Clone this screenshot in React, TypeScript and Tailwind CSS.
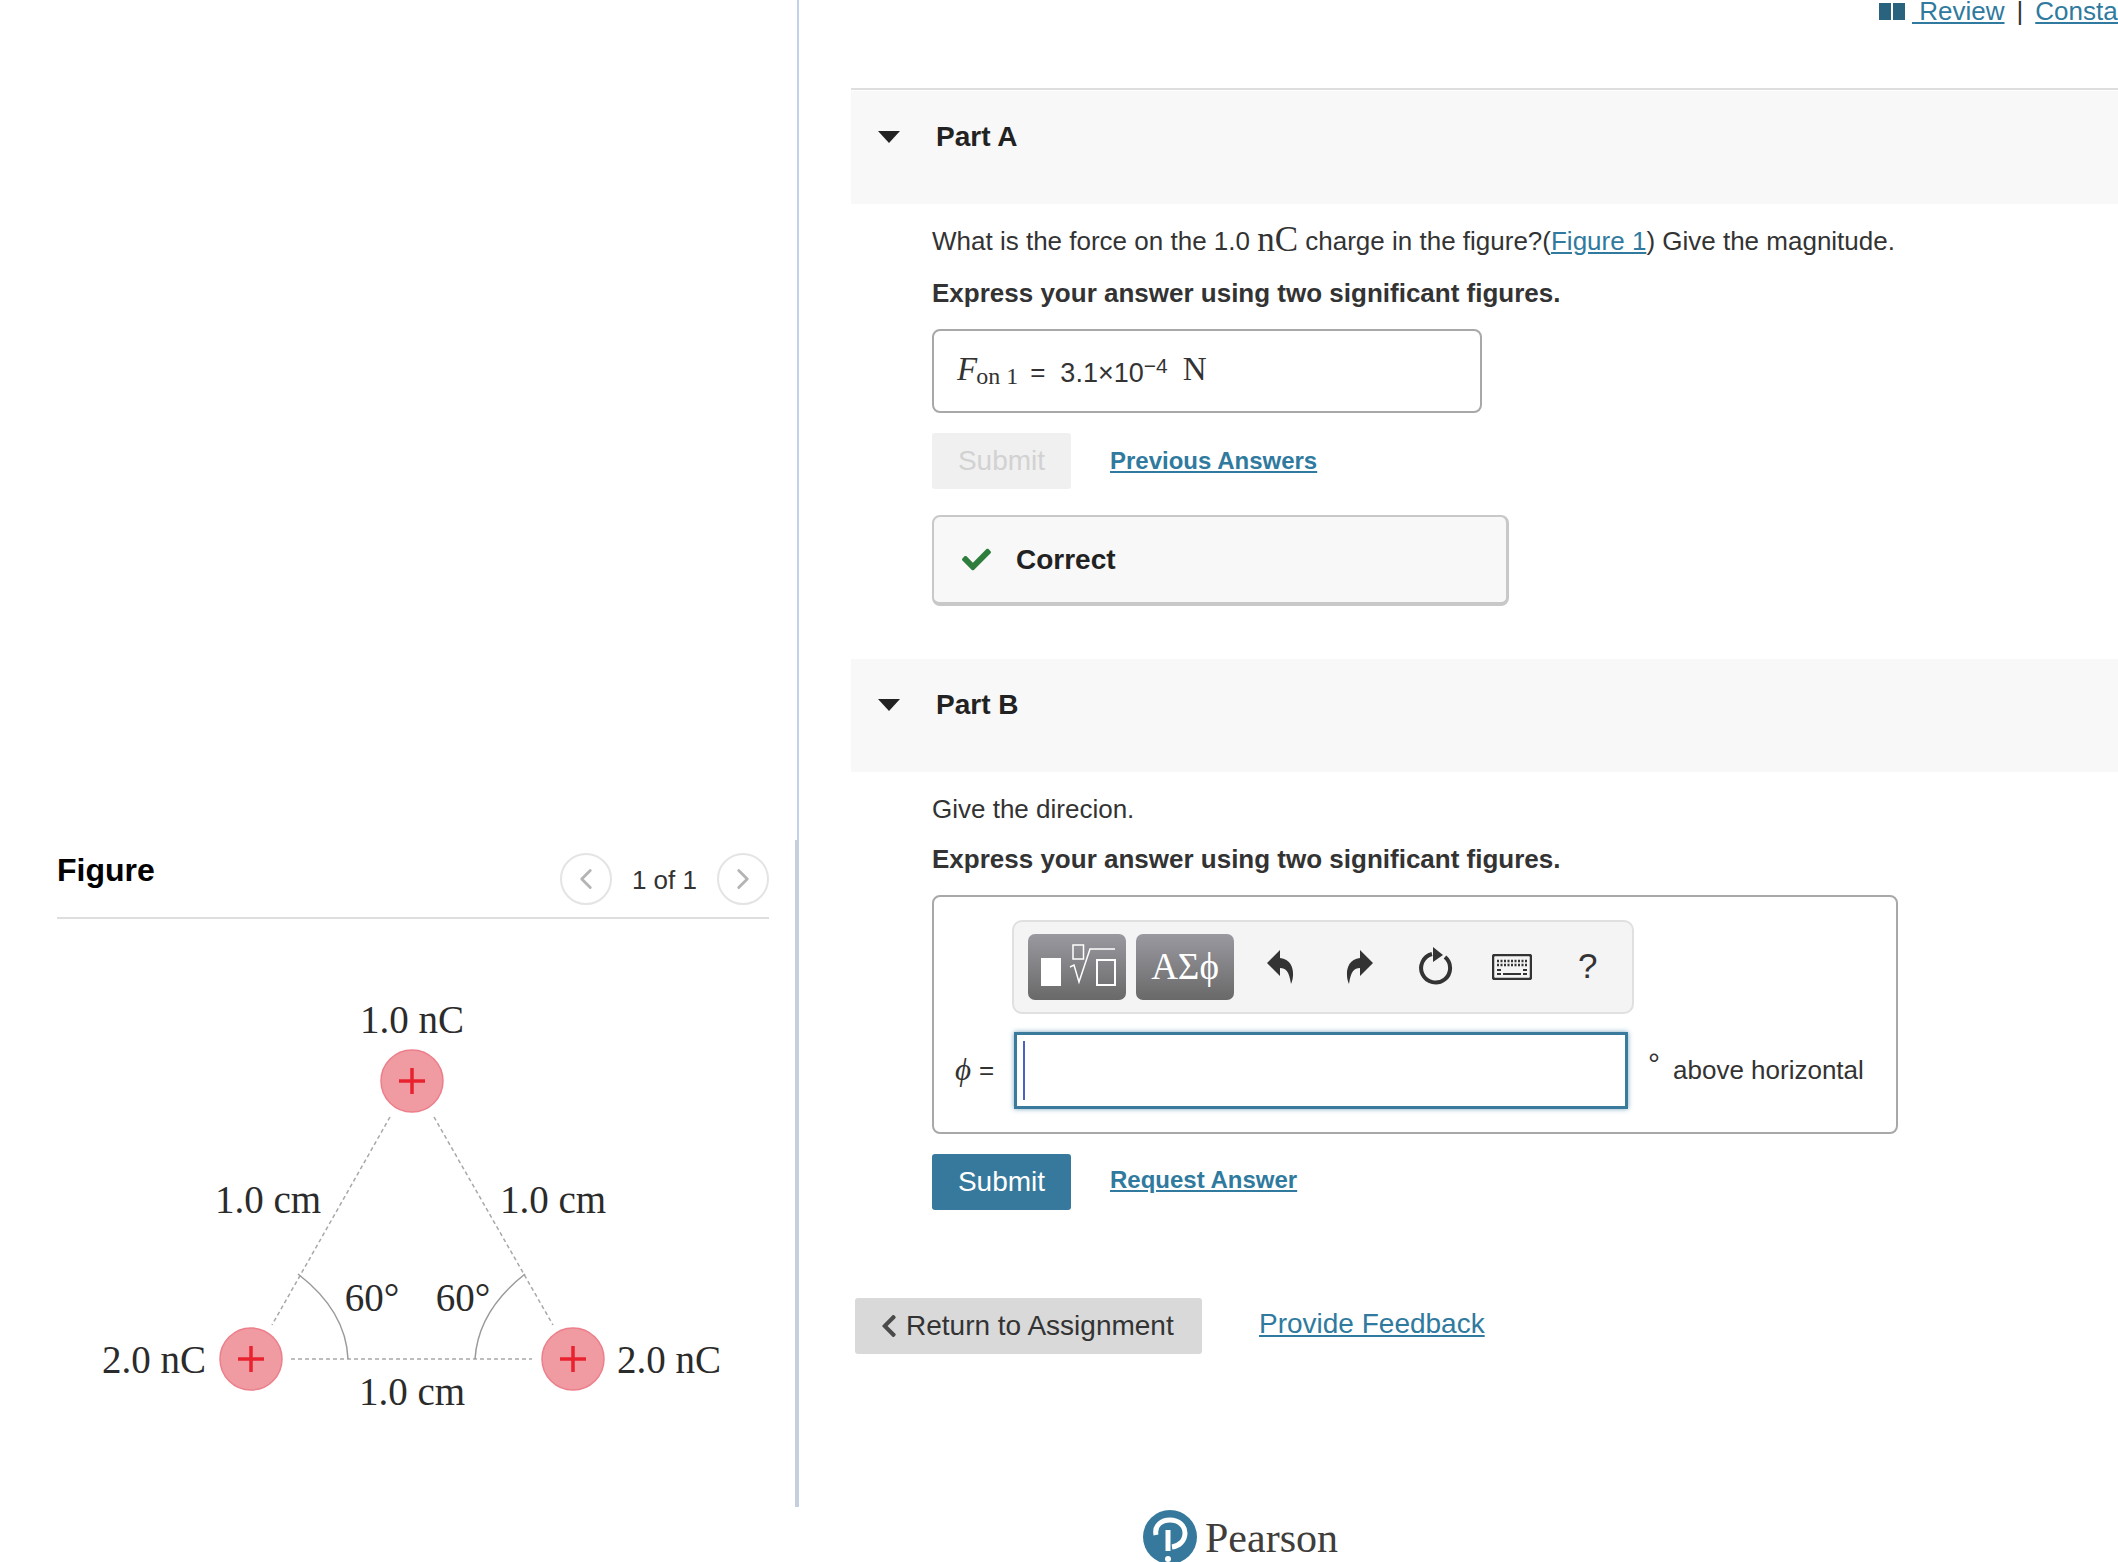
import { ChevronLeft, ChevronRight } from "lucide-react";
import { FaCheck, FaChevronLeft } from "react-icons/fa";

const LINK = "text-[#2f7a9e] underline";

function ChargeFigure() {
  const charges = [
    { cx: 412, cy: 162 },
    { cx: 251, cy: 440 },
    { cx: 573, cy: 440 },
  ];
  const labels = [
    { x: 412, y: 114, text: "1.0 nC" },
    { x: 268, y: 294, text: "1.0 cm" },
    { x: 553, y: 294, text: "1.0 cm" },
    { x: 154, y: 454, text: "2.0 nC" },
    { x: 669, y: 454, text: "2.0 nC" },
    { x: 412, y: 486, text: "1.0 cm" },
    { x: 372, y: 392, text: "60°" },
    { x: 463, y: 392, text: "60°" },
  ];
  return (
    <svg width="794" height="586" viewBox="0 0 794 586" className="block">
      <g stroke="#a8a8a8" strokeWidth="1.5" strokeDasharray="4 3" fill="none">
        <line x1="390" y1="198" x2="272" y2="406" />
        <line x1="434" y1="198" x2="553" y2="406" />
        <line x1="291" y1="440" x2="532" y2="440" />
      </g>
      <g stroke="#9a9a9a" strokeWidth="1.5" fill="none">
        <path d="M298 355 Q346 392 348 440" />
        <path d="M525 355 Q478 392 475 440" />
      </g>
      {charges.map((c) => (
        <g key={c.cx}>
          <circle cx={c.cx} cy={c.cy} r="31" fill="#f09aa2" stroke="#ec7f8b" strokeWidth="1.5" />
          <path
            d={`M${c.cx - 13} ${c.cy}H${c.cx + 13}M${c.cx} ${c.cy - 13}V${c.cy + 13}`}
            stroke="#e8232f"
            strokeWidth="3.5"
          />
        </g>
      ))}
      {labels.map((l) => (
        <text
          key={l.x + l.text}
          x={l.x}
          y={l.y}
          textAnchor="middle"
          fontFamily="'Liberation Serif', serif"
          fontSize="39"
          fill="#2b2b2b"
        >
          {l.text}
        </text>
      ))}
    </svg>
  );
}

function PartHeader({ title }: { title: string }) {
  return (
    <div className="flex items-center h-[113px] pb-[22px] bg-[#f8f8f8] pl-[27px]">
      <div className="w-0 h-0 border-x-[11px] border-x-transparent border-t-[12px] border-t-[#222]" />
      <h2 className="ml-[36px] text-[28px] font-bold text-[#222]">{title}</h2>
    </div>
  );
}

function TemplateIcon() {
  return (
    <svg width="98" height="66" viewBox="0 0 98 66" fill="none">
      <rect x="13" y="24" width="20" height="28" fill="white" />
      <rect x="45" y="11" width="10.500" height="14" stroke="white" strokeWidth="1.500" />
      <path d="M42 33l4-2 5 17L62 15h25" stroke="white" strokeWidth="1.500" />
      <rect x="69" y="26" width="18" height="25" stroke="white" strokeWidth="2" />
    </svg>
  );
}

function Toolbar() {
  const btn = "flex items-center justify-center w-[98px] h-[66px] rounded-[7px] bg-gradient-to-b from-[#9b99a0] to-[#696969]";
  return (
    <div className="flex items-center w-[622px] h-[94px] ml-[78px] pl-[14px] bg-[#f4f4f4] border-2 border-[#e0e0e0] rounded-[10px]">
      <div className={btn}>
        <TemplateIcon />
      </div>
      <div className={`${btn} ml-[10px] font-['Liberation_Serif',serif] text-[37px] text-white`}>ΑΣϕ</div>
      {/* undo */}
      <svg className="ml-[33px]" width="28" height="34" viewBox="0 0 28 34" fill="#333">
        <path d="M13 0L0 13l13 13v-8c6 0 9 3 11 16 3-6 5-24-11-26z" />
      </svg>
      {/* redo */}
      <svg className="ml-[50px]" width="28" height="34" viewBox="0 0 28 34" fill="#333">
        <path d="M15 0l13 13-13 13v-8C9 18 6 21 4 34 1 28-1 10 15 8z" />
      </svg>
      {/* reset */}
      <svg className="ml-[46px]" width="36" height="40" viewBox="0 0 36 40" fill="none">
        <path d="M13 7a14.500 14.500 0 1 0 13 3" stroke="#333" strokeWidth="4" />
        <path d="M14 0l10 8-10 7z" fill="#333" />
      </svg>
      {/* keyboard */}
      <svg className="ml-[37px]" width="40" height="26" viewBox="0 0 40 26" fill="none">
        <rect x="1" y="1" width="38" height="24" rx="2" stroke="#333" strokeWidth="2.500" />
        <path d="M5 7h30M5 11h30" stroke="#333" strokeWidth="2.500" strokeDasharray="2 1.500" />
        <path d="M5 16h4M31 16h4M5 20h4M31 20h4M11 20h18" stroke="#333" strokeWidth="2" />
      </svg>
      <span className="ml-[46px] -mt-[4px] text-[35px] text-[#333] leading-none">?</span>
    </div>
  );
}

export default function App() {
  return (
    <div className="flex w-[2118px] h-[1562px] overflow-hidden bg-white font-['Liberation_Sans',Arial,sans-serif] text-[26px] text-[#333]">
      {/* Figure pane */}
      <aside className="w-[800px] shrink-0">
        <div className="h-[840px] w-[799px] border-r-2 border-[#c3d2e8]" />
        <div className="h-[667px] w-[799px] border-r-[4px] border-[#c5d0de] pl-[57px] pr-[26px]">
          <div className="flex items-center justify-between h-[79px] border-b-2 border-[#dedede]">
            <h2 className="text-[32px] font-bold text-black -mt-[17px]">Figure</h2>
            <div className="flex items-center">
              <button className="flex items-center justify-center size-[52px] rounded-full border-2 border-[#e4e4e4] text-[#b4b4b4]">
                <ChevronLeft size={34} strokeWidth={2} />
              </button>
              <span className="mx-[20px] mt-[3px] text-[26px] text-[#333]">1 of 1</span>
              <button className="flex items-center justify-center size-[52px] rounded-full border-2 border-[#e4e4e4] text-[#b4b4b4]">
                <ChevronRight size={34} strokeWidth={2} />
              </button>
            </div>
          </div>
          <div className="-ml-[57px]">
            <ChargeFigure />
          </div>
        </div>
      </aside>

      {/* Problem pane */}
      <main className="flex-1 min-w-0 pl-[51px]">
        <div className="flex items-start h-[90px] overflow-hidden pl-[1028px] border-b-2 border-[#dedede] whitespace-nowrap">
          <div className="flex items-center h-[22px]">
            <span className="flex gap-[2px]">
              <span className="w-[12px] h-[17px] bg-[#2a637e]" />
              <span className="w-[12px] h-[17px] bg-[#2a637e]" />
            </span>
            <a className={`ml-[7px] ${LINK}`}>&nbsp;Review</a>
            <span className="mx-[12px]">|</span>
            <a className={LINK}>Constants</a>
          </div>
        </div>

        <div className="h-[1px]" />
        <PartHeader title="Part A" />
        <section className="pl-[81px]">
          <p className="mt-[18px] h-[38px] flex items-center whitespace-nowrap">
            What is the force on the 1.0&nbsp;
            <span className="font-['Liberation_Serif',serif] text-[35px] -mt-[2px]">nC</span>
            &nbsp;charge in the figure?(<a className={LINK}>Figure 1</a>) Give the magnitude.
          </p>
          <p className="mt-[15px] font-bold leading-[36px]">Express your answer using two significant figures.</p>
          <div className="flex items-center w-[550px] h-[84px] mt-[18px] pl-[23px] border-2 border-[#a8a8a8] rounded-[8px] whitespace-nowrap">
            <span className="font-['Liberation_Serif',serif] italic text-[33px] -mt-[3px]">F</span>
            <span className="-ml-[1px] font-['Liberation_Serif',serif] text-[24px] mt-[10px]">on 1</span>
            <span className="ml-[12px] mt-[2px]">=</span>
            <span className="ml-[15px] mt-[5px] text-[27px]">3.1×10</span>
            <span className="text-[21px] -mt-[10px]">−4</span>
            <span className="ml-[15px] -mt-[2px] font-['Liberation_Serif',serif] text-[33px]">N</span>
          </div>
          <div className="flex items-center mt-[20px]">
            <button className="w-[139px] h-[56px] rounded-[3px] bg-[#f0f0f0] text-[#d2d2d2] text-[28px]">Submit</button>
            <a className={`ml-[39px] text-[24px] font-bold ${LINK}`}>Previous Answers</a>
          </div>
          <div className="flex items-center w-[577px] h-[91px] mt-[26px] pl-[28px] bg-[#f8f8f8] border-2 border-[#c8c8c8] border-b-4 border-r-[3px] rounded-[8px]">
            <FaCheck className="text-[#2e7d3c]" size={29} />
            <span className="ml-[25px] text-[28px] font-bold text-[#222]">Correct</span>
          </div>
        </section>

        <div className="mt-[53px]">
          <PartHeader title="Part B" />
        </div>
        <section className="pl-[81px]">
          <p className="mt-[19px] leading-[36px]">Give the direcion.</p>
          <p className="mt-[14px] font-bold leading-[36px]">Express your answer using two significant figures.</p>
          <div className="w-[966px] h-[239px] mt-[18px] pt-[23px] border-2 border-[#a8a8a8] rounded-[8px]">
            <Toolbar />
            <div className="flex items-center mt-[18px] pl-[21px]">
              <span className="flex items-center gap-[8px] w-[59px] whitespace-nowrap">
                <span className="font-['Liberation_Serif',serif] italic text-[31px]">ϕ</span>
                <span>=</span>
              </span>
              <div className="w-[614px] h-[77px] py-[6px] pl-[6px] border-[3px] border-[#3a7a9c] shadow-[0_0_5px_#7fa9bf]">
                <div className="w-[2px] h-full bg-[#4a63c0]" />
              </div>
              <span className="ml-[20px] -mt-[14px] text-[30px] leading-none">°</span>
              <span className="ml-[13px] whitespace-nowrap">above horizontal</span>
            </div>
          </div>
          <div className="flex items-center mt-[20px]">
            <button className="w-[139px] h-[56px] rounded-[3px] bg-[#36799c] text-white text-[28px]">Submit</button>
            <a className={`ml-[39px] -mt-[4px] text-[24px] font-bold ${LINK}`}>Request Answer</a>
          </div>
        </section>

        <div className="flex items-start mt-[88px] pl-[4px]">
          <button className="flex items-center w-[347px] h-[56px] pl-[21px] rounded-[3px] bg-[#d9d9d9] text-[#333] text-[28px] whitespace-nowrap">
            <FaChevronLeft className="text-[#4a4a4a]" size={26} />
            <span className="ml-[4px]">Return to Assignment</span>
          </button>
          <a className={`ml-[57px] mt-[5px] text-[28px] ${LINK}`}>Provide Feedback</a>
        </div>

        <div className="flex items-start mt-[156px] pl-[292px]">
          <svg className="shrink-0" width="54" height="54" viewBox="0 0 54 54">
            <circle cx="27" cy="27" r="27" fill="#36799c" />
            <path d="M13 25c-2-10 6-15 14-15 9 0 15 6 15 13 0 8-6 13-13 14" fill="none" stroke="white" strokeWidth="5" />
            <path d="M25 20v21" stroke="white" strokeWidth="5" />
            <circle cx="25" cy="49" r="3" fill="white" />
          </svg>
          <span className="ml-[8px] font-['Liberation_Serif',serif] text-[42px] text-[#403d3a] leading-[56px]">Pearson</span>
        </div>
      </main>
    </div>
  );
}
